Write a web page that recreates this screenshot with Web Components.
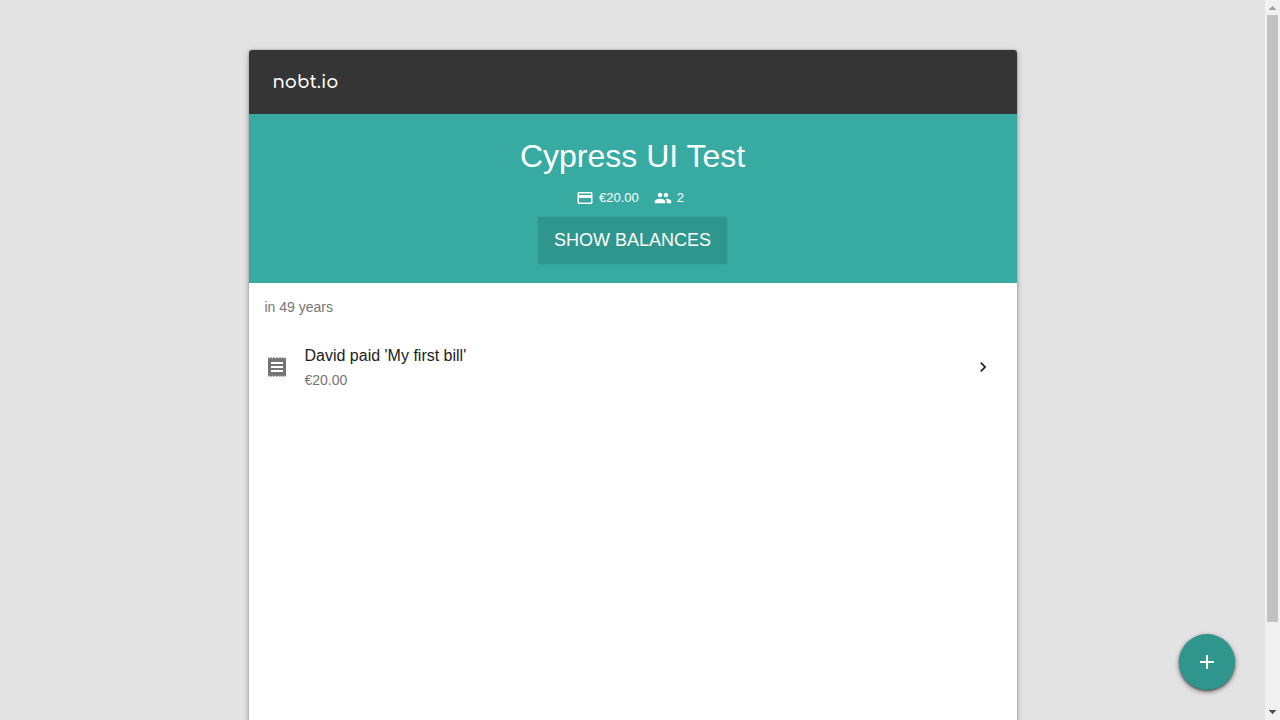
<!DOCTYPE html>
<html lang="en">
<head>
<meta charset="utf-8">
<meta name="viewport" content="width=device-width, initial-scale=1">
<title>nobt.io</title>
<style>
  html, body { margin: 0; height: 100%; }
  body { font-family: "Liberation Sans", Arial, sans-serif; background: #e3e3e3; }
</style>
</head>
<body>
<nobt-shell>
  <nobt-card>
    <nobt-bar>nobt.io</nobt-bar>
    <nobt-summary>
      <span slot="title">Cypress UI Test</span>
      <span slot="total">€20.00</span>
      <span slot="people">2</span>
      <span slot="action">Show balances</span>
    </nobt-summary>
    <nobt-feed>
      <span slot="heading">in 49 years</span>
      <nobt-bill>
        <span slot="title">David paid 'My first bill'</span>
        <span slot="amount">€20.00</span>
      </nobt-bill>
    </nobt-feed>
  </nobt-card>
  <nobt-fab slot="fab"></nobt-fab>
  <nobt-scrollbar slot="scrollbar"></nobt-scrollbar>
</nobt-shell>

<script>
const define = (name, html) => {
  const template = document.createElement('template');
  template.innerHTML = html;
  customElements.define(name, class extends HTMLElement {
    constructor() {
      super();
      this.attachShadow({ mode: 'open' }).append(template.content.cloneNode(true));
    }
  });
};

define('nobt-shell', `
  <style>
    :host { display: grid; grid-template-columns: 1fr 15px; grid-template-rows: 100vh; position: relative; overflow: hidden; }
    main { min-width: 0; overflow: hidden; }
    ::slotted([slot="fab"]) { position: absolute; right: 45px; bottom: 30px; }
  </style>
  <main><slot></slot></main>
  <slot name="scrollbar"></slot>
  <slot name="fab"></slot>`);

define('nobt-card', `
  <style>
    :host { display: block; box-sizing: border-box; max-width: 768px; min-height: 100vh; margin: 50px auto;
      background: #fff; border-radius: 3px; overflow: hidden;
      box-shadow: 0 0 2px rgba(0,0,0,.24), 0 2px 6px rgba(0,0,0,.32); }
  </style>
  <slot></slot>`);

define('nobt-bar', `
  <style>
    :host { display: flex; align-items: center; height: 64px; padding: 0 24px; background: #353535; }
    a { color: #fff; font: 600 18px/24px Comfortaa, Quicksand, Lato, sans-serif; text-decoration: none; }
  </style>
  <a href="#"><slot></slot></a>`);

define('nobt-summary', `
  <style>
    :host { display: flex; flex-direction: column; align-items: center; padding: 24px 16px 19px; background: #37aba2; color: #fff; }
    h1 { margin: 0; font-size: 32px; line-height: 36px; font-weight: 400; }
    .meta { display: flex; gap: 15px; margin: 14px 5px 9px 0; font-size: 13px; line-height: 20px; }
    .meta div { display: flex; align-items: center; gap: 5px; }
    svg { width: 18px; height: 18px; fill: currentColor; }
    button { border: 0; border-radius: 2px; padding: 12px 16px; background: #2e968d; color: inherit;
      font: 18px/23px "Liberation Sans", Arial, sans-serif; text-transform: uppercase;
      box-shadow: 0 0 2px rgba(0,0,0,.12); cursor: pointer; }
  </style>
  <h1><slot name="title"></slot></h1>
  <div class="meta">
    <div><svg viewBox="0 0 24 24" aria-hidden="true"><path d="M20 4H4c-1.11 0-1.99.89-1.99 2L2 18c0 1.11.89 2 2 2h16c1.11 0 2-.89 2-2V6c0-1.11-.89-2-2-2zm0 14H4v-6h16v6zm0-10H4V6h16v2z"/></svg><slot name="total"></slot></div>
    <div><svg viewBox="0 0 24 24" aria-hidden="true"><path d="M16 11c1.66 0 2.99-1.34 2.99-3S17.66 5 16 5c-1.66 0-3 1.34-3 3s1.34 3 3 3zm-8 0c1.66 0 2.99-1.34 2.99-3S9.66 5 8 5C6.34 5 5 6.34 5 8s1.34 3 3 3zm0 2c-2.33 0-7 1.17-7 3.5V19h14v-2.500c0-2.33-4.670-3.500-7-3.500zm8 0c-.29 0-.62.02-.97.05 1.160.84 1.970 1.970 1.970 3.450V19h6v-2.500c0-2.330-4.670-3.500-7-3.500z"/></svg><slot name="people"></slot></div>
  </div>
  <button type="button"><slot name="action"></slot></button>`);

define('nobt-feed', `
  <style>
    :host { display: block; }
    h2 { margin: 0; padding: 0 16px; font-size: 14px; line-height: 48px; font-weight: 400; color: #757575; }
  </style>
  <h2><slot name="heading"></slot></h2>
  <slot></slot>`);

define('nobt-bill', `
  <style>
    :host { display: block; }
    a { display: flex; align-items: center; padding: 12px 24px 12px 16px; color: #212121; text-decoration: none; }
    .receipt { width: 24px; height: 24px; margin-right: 16px; fill: #757575; }
    .chevron { width: 20px; height: 20px; fill: #212121; }
    .text { flex: 1; }
    .title { font-size: 16px; line-height: 26px; }
    .amount { font-size: 14px; line-height: 22px; color: #757575; }
  </style>
  <a href="#">
    <svg class="receipt" viewBox="0 0 24 24" aria-hidden="true"><path d="M18 17H6v-2h12v2zm0-4H6v-2h12v2zm0-4H6V7h12v2zM3 22l1.500-1.500L6 22l1.500-1.500L9 22l1.500-1.500L12 22l1.500-1.500L15 22l1.500-1.500L18 22l1.500-1.500L21 22V2l-1.500 1.500L18 2l-1.500 1.500L15 2l-1.500 1.500L12 2l-1.500 1.500L9 2 7.500 3.500 6 2 4.500 3.500 3 2v20z"/></svg>
    <div class="text">
      <div class="title"><slot name="title"></slot></div>
      <div class="amount"><slot name="amount"></slot></div>
    </div>
    <svg class="chevron" viewBox="0 0 24 24" aria-hidden="true"><path d="M10 6L8.590 7.410 13.170 12l-4.580 4.590L10 18l6-6z"/></svg>
  </a>`);

define('nobt-fab', `
  <style>
    :host { display: block; }
    button { display: grid; place-items: center; width: 56px; height: 56px; padding: 0; border: 0; border-radius: 50%;
      background: #2e968d; color: #fff; box-shadow: 0 2px 5px rgba(0,0,0,.5), 0 1px 2px rgba(0,0,0,.4); cursor: pointer; }
    svg { width: 24px; height: 24px; fill: currentColor; }
  </style>
  <button type="button" aria-label="Add bill"><svg viewBox="0 0 24 24" aria-hidden="true"><path d="M19 13h-6v6h-2v-6H5v-2h6V5h2v6h6v2z"/></svg></button>`);

define('nobt-scrollbar', `
  <style>
    :host { display: grid; grid-template-rows: 15px 1fr 15px; background: #f1f1f1; }
    svg { width: 15px; height: 15px; display: block; }
    .track { padding: 0 2px; }
    .thumb { height: 88%; background: #c1c1c1; }
  </style>
  <svg viewBox="0 0 15 15" fill="#a0a0a0" aria-hidden="true"><path d="M7 6h1v1h1v1h1v1h1v1H4V9h1V8h1V7h1z"/></svg>
  <div class="track"><div class="thumb"></div></div>
  <svg viewBox="0 0 15 15" fill="#505050" aria-hidden="true"><path d="M4 10h7v1h-1v1H9v1H8v1H7v-1H6v-1H5v-1H4z" transform="translate(0 -5)"/></svg>`);
</script>
</body>
</html>
